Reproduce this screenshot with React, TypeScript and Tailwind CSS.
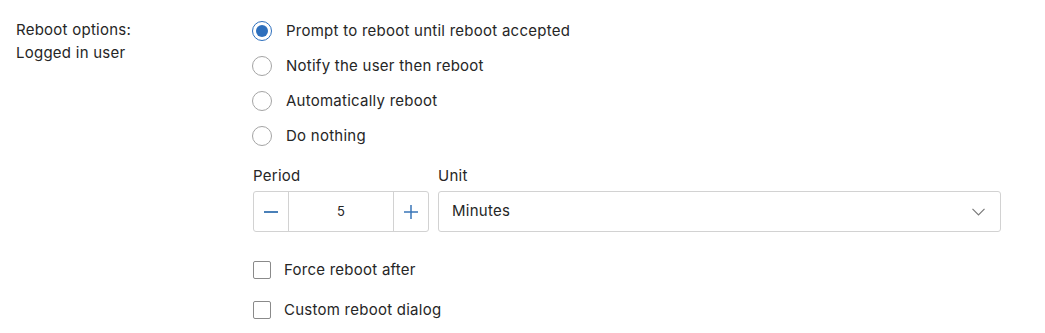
import { useState } from 'react'

const OPTIONS = [
  'Prompt to reboot until reboot accepted',
  'Notify the user then reboot',
  'Automatically reboot',
  'Do nothing',
]

export default function App() {
  const [choice, setChoice] = useState(0)
  const [period, setPeriod] = useState(5)
  const [force, setForce] = useState(false)
  const [custom, setCustom] = useState(false)

  return (
    <div
      className="flex h-[333px] w-[1045px] bg-white text-[15px] tracking-[0.25px] text-[#262626]"
      style={{ fontFamily: 'Inter, "Noto Sans", sans-serif' }}
    >
      <div className="w-[252px] shrink-0 pl-4 pt-[19px] leading-[22px]">
        <p>Reboot options:</p>
        <p className="mt-px">Logged in user</p>
      </div>

      <div className="flex w-[749px] flex-col pt-[21px]">
        <div className="flex flex-col gap-[15px]">
          {OPTIONS.map((label, index) => (
            <button key={label} onClick={() => setChoice(index)} className="flex h-[20px] items-center gap-[14px] text-left">
              <span
                className={`flex h-[20px] w-[20px] items-center justify-center rounded-full border ${choice === index ? 'border-[#2d6fbd]' : 'border-[#a4a4a4]'}`}
              >
                {choice === index && <span className="h-[12px] w-[12px] rounded-full bg-[#2d6fbd]" />}
              </span>
              <span>{label}</span>
            </button>
          ))}
        </div>

        <div className="mt-[22px] flex gap-[9px] pl-px">
          <div className="flex flex-col">
            <label className="h-[16px] leading-[16px]">Period</label>
            <div className="mt-[7px] flex h-[41px] w-[176px] rounded-[3px] border border-[#d2d2d2]">
              <button onClick={() => setPeriod((p) => Math.max(0, p - 1))} className="flex w-[35px] items-center justify-center border-r border-[#d2d2d2]">
                <span className="h-[2px] w-[14px] bg-[#4a80b8]" />
              </button>
              <input
                value={period}
                onChange={(event) => setPeriod(Number.parseInt(event.target.value, 10) || 0)}
                className="w-[104px] text-center text-[13px] outline-none"
              />
              <button onClick={() => setPeriod((p) => p + 1)} className="flex flex-1 items-center justify-center border-l border-[#d2d2d2]">
                <svg width="14" height="14" viewBox="0 0 14 14" fill="none" stroke="#3a76b8" strokeWidth="1.5">
                  <path d="M7 0v14M0 7h14" />
                </svg>
              </button>
            </div>
          </div>
          <div className="flex flex-col">
            <label className="h-[16px] leading-[16px]">Unit</label>
            <button className="mt-[7px] flex h-[41px] w-[563px] items-center justify-between rounded-[3px] border border-[#d2d2d2] pl-[13px] pr-[15px] text-left">
              <span>Minutes</span>
              <svg width="13" height="8" viewBox="0 0 13 8" fill="none" stroke="#7a7a7a" strokeWidth="1.2">
                <path d="M0.5 0.8l6 6 6-6" />
              </svg>
            </button>
          </div>
        </div>

        <div className="mt-[29px] flex flex-col gap-[22px] pl-px">
          <label className="flex h-[18px] cursor-pointer items-center gap-[13px]" onClick={() => setForce(!force)}>
            <span className={`h-[18px] w-[18px] rounded-[2px] border ${force ? 'border-[#2d6fbd] bg-[#2d6fbd]' : 'border-[#8a8a8a]'}`} />
            <span>Force reboot after</span>
          </label>
          <label className="flex h-[18px] cursor-pointer items-center gap-[13px]" onClick={() => setCustom(!custom)}>
            <span className={`h-[18px] w-[18px] rounded-[2px] border ${custom ? 'border-[#2d6fbd] bg-[#2d6fbd]' : 'border-[#8a8a8a]'}`} />
            <span>Custom reboot dialog</span>
          </label>
        </div>
      </div>
    </div>
  )
}
